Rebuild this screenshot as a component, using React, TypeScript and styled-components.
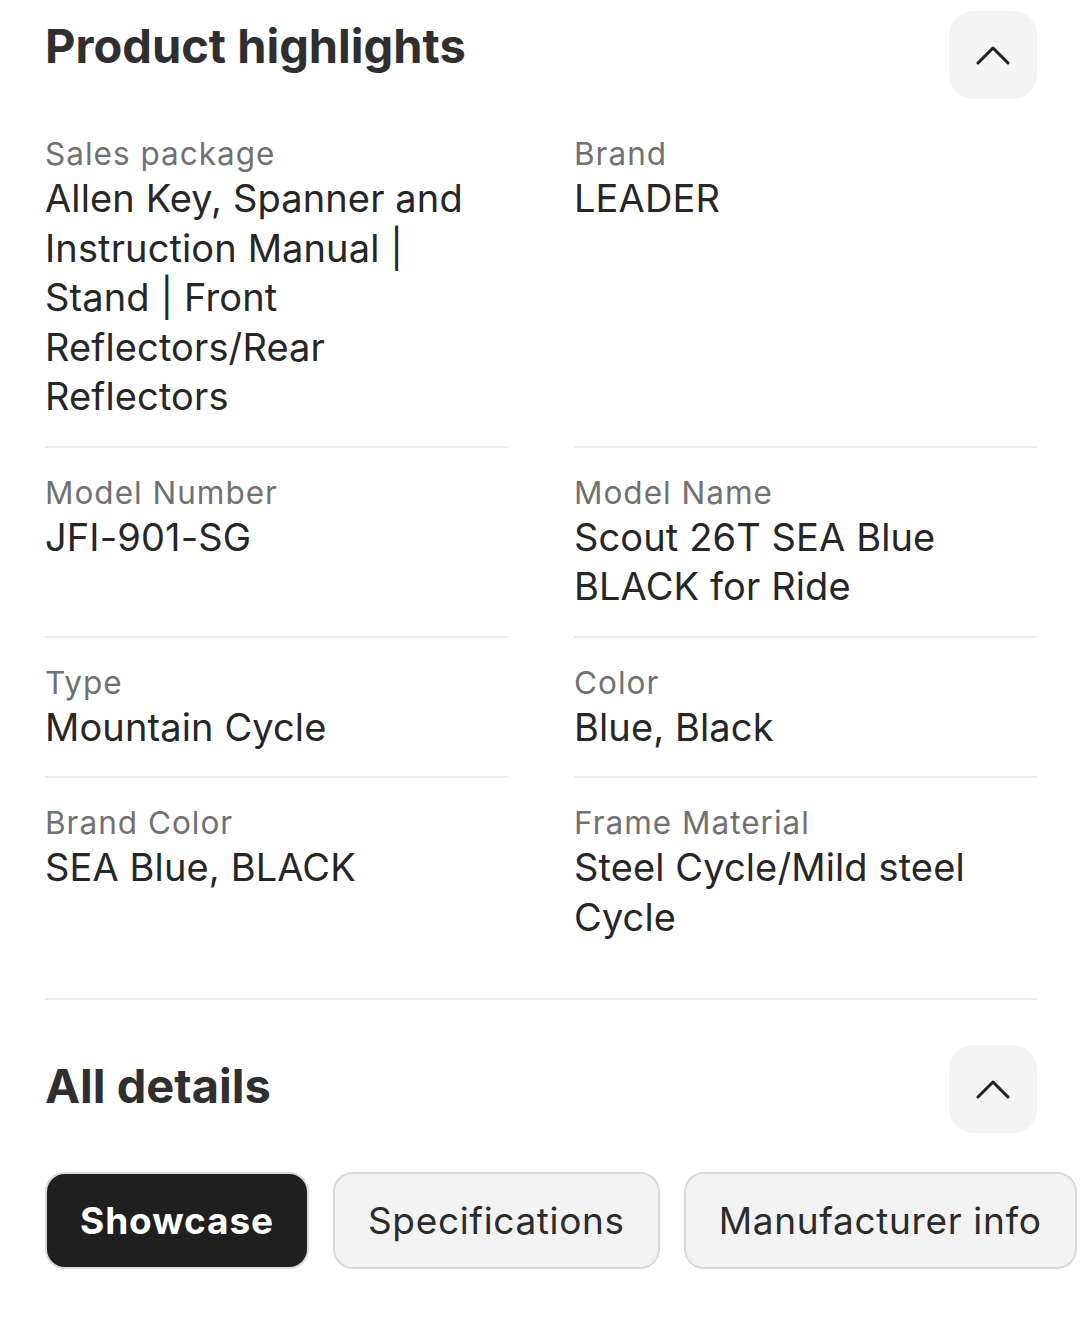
import React, { useState } from "react";
import styled, { createGlobalStyle } from "styled-components";

const GlobalStyle = createGlobalStyle`
    html, body {
        margin: 0;
        padding: 0;
        background: #ffffff;
    }
    body {
        font-family: Inter, "Noto Sans", "Liberation Sans", sans-serif;
        color: #212121;
        overflow-x: hidden;
    }
`;

const Page = styled.div`
    width: 1080px;
    box-sizing: border-box;
    padding: 11px 43px 40px 45px;
`;

const SectionHeader = styled.div`
    display: flex;
    justify-content: space-between;
    align-items: flex-start;
`;

const Title = styled.h2<{ $offset: number }>`
    margin: ${(p) => p.$offset}px 0 0;
    font-size: 47px;
    line-height: 56px;
    font-weight: 700;
    color: #2f2f2f;
`;

const ToggleButton = styled.button`
    width: 88px;
    height: 88px;
    border: none;
    border-radius: 24px;
    background: #f4f4f4;
    display: flex;
    align-items: center;
    justify-content: center;
    padding: 0;
    flex-shrink: 0;
    cursor: pointer;
`;

const Grid = styled.div`
    display: grid;
    grid-template-columns: 1fr 1fr;
    column-gap: 66px;
    margin-top: 10px;
    margin-bottom: 32px;
`;

const Cell = styled.div<{ $last: boolean }>`
    padding: 25px 0 24px;
    border-bottom: ${(p) => (p.$last ? "none" : "2px solid #ececec")};
`;

const Label = styled.div`
    font-size: 31.5px;
    line-height: 40px;
    letter-spacing: 1px;
    color: #717171;
`;

const Value = styled.div`
    font-size: 38px;
    line-height: 49.5px;
    letter-spacing: 0.12px;
    color: #262626;
`;

const Divider = styled.hr`
    margin: 0;
    border: none;
    height: 2px;
    background: #ececec;
`;

const DetailsSection = styled.div`
    margin-top: 45px;
`;

const TabRow = styled.div`
    display: flex;
    gap: 24px;
    margin-top: 39px;
    width: max-content;
`;

const Tab = styled.button<{ $active: boolean }>`
    height: 97px;
    box-sizing: border-box;
    padding: 0 33px;
    border-radius: 20px;
    border: 2px solid #d9d9d9;
    background: ${(p) => (p.$active ? "#1f1f1f" : "#f3f3f3")};
    color: ${(p) => (p.$active ? "#ffffff" : "#2b2b2b")};
    font-family: Inter, "Noto Sans", sans-serif;
    font-size: 37px;
    letter-spacing: ${(p) => (p.$active ? "0.9px" : "0.65px")};
    font-weight: ${(p) => (p.$active ? 700 : 400)};
    white-space: nowrap;
    cursor: pointer;
`;

const ChevronUp = () => (
    <svg width="34" height="20" viewBox="0 0 34 20" fill="none">
        <path d="M2 18 L17 3 L32 18" stroke="#212121" strokeWidth="3" strokeLinecap="round" strokeLinejoin="round" />
    </svg>
);

const highlights = [
    { label: "Sales package", value: "Allen Key, Spanner and Instruction Manual | Stand | Front Reflectors/Rear Reflectors" },
    { label: "Brand", value: "LEADER" },
    { label: "Model Number", value: "JFI-901-SG" },
    { label: "Model Name", value: "Scout 26T SEA Blue BLACK for Ride" },
    { label: "Type", value: "Mountain Cycle" },
    { label: "Color", value: "Blue, Black" },
    { label: "Brand Color", value: "SEA Blue, BLACK" },
    { label: "Frame Material", value: "Steel Cycle/Mild steel Cycle" },
];

const tabs = ["Showcase", "Specifications", "Manufacturer info"];

const App: React.FC = () => {
    const [activeTab, setActiveTab] = useState("Showcase");

    return (
        <>
            <GlobalStyle />
            <Page>
                <SectionHeader>
                    <Title $offset={7}>Product highlights</Title>
                    <ToggleButton type="button" aria-label="collapse">
                        <ChevronUp />
                    </ToggleButton>
                </SectionHeader>
                <Grid>
                    {highlights.map((item, index) => (
                        <Cell key={item.label} $last={index >= highlights.length - 2}>
                            <Label>{item.label}</Label>
                            <Value>{item.value}</Value>
                        </Cell>
                    ))}
                </Grid>
                <Divider />
                <DetailsSection>
                    <SectionHeader>
                        <Title $offset={13}>All details</Title>
                        <ToggleButton type="button" aria-label="collapse">
                            <ChevronUp />
                        </ToggleButton>
                    </SectionHeader>
                    <TabRow>
                        {tabs.map((tab) => (
                            <Tab key={tab} type="button" $active={tab === activeTab} onClick={() => setActiveTab(tab)}>
                                {tab}
                            </Tab>
                        ))}
                    </TabRow>
                </DetailsSection>
            </Page>
        </>
    );
};

export default App;
